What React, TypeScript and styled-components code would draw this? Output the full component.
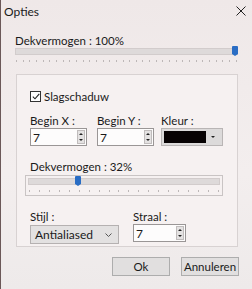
import React from "react"
import styled, { createGlobalStyle } from "styled-components"

const Global = createGlobalStyle`
  html, body { margin: 0; padding: 0; background: #efe9e9; }
  body { font-family: Lato, "Noto Sans", sans-serif; }
`

const Window = styled.div`
  width: 252px;
  height: 289px;
  box-sizing: border-box;
  border-left: 1px solid #6b5858;
  background: linear-gradient(180deg, #efe8e8 0%, #f3eeee 60%, #eeeaea 100%);
  color: #1a1a1a;
  font-size: 11.5px;
  display: flex;
  flex-direction: column;
`

const TitleBar = styled.div`
  height: 22px;
  display: flex;
  align-items: center;
  justify-content: space-between;
  padding: 0 6px 0 3px;
  font-size: 12px;
`

const Label = styled.div`
  line-height: 13px;
  height: 13px;
  white-space: nowrap;
`

const Top = styled.div`
  padding: 12px 14px 0 14px;
`

const Track = styled.div<{ $inset?: boolean }>`
  position: relative;
  height: 5px;
  margin-top: ${(p) => (p.$inset ? "2px" : "1px")};
  background: #dedada;
  border: 1px solid #d2cccc;
`

const Thumb = styled.div<{ $pos: string }>`
  position: absolute;
  top: -3px;
  left: ${(p) => p.$pos};
  width: 6px;
  height: 8px;
  background: #2a6dc4;
  border-radius: 1px 1px 0 0;
  &::after {
    content: "";
    position: absolute;
    left: 0;
    top: 8px;
    border-left: 3px solid transparent;
    border-right: 3px solid transparent;
    border-top: 2px solid #2a6dc4;
  }
`

const Ticks = styled.div`
  display: flex;
  justify-content: space-between;
  margin: 5px 1px 0 1px;
  height: 2px;
  span {
    width: 1px;
    height: 2px;
    background: #bdb7b7;
  }
`

const Group = styled.div`
  margin: 12px 14px 0 15px;
  height: 173px;
  box-sizing: border-box;
  border: 1px solid #d8d2d2;
  background: #f6f1f1;
  padding: 16px 13px 0 13px;
`

const CheckRow = styled.div`
  display: flex;
  align-items: center;
  gap: 3px;
  height: 11px;
`

const Box = styled.div`
  width: 9px;
  height: 9px;
  border: 1px solid #333;
  background: #fff;
  display: flex;
  align-items: center;
  justify-content: center;
`

const FieldRow = styled.div`
  display: flex;
  margin-top: 12px;
`

const Field = styled.div<{ $w: number }>`
  width: ${(p) => p.$w}px;
  display: flex;
  flex-direction: column;
`

const SpinBox = styled.div<{ $w: number }>`
  width: ${(p) => p.$w}px;
  height: 18px;
  box-sizing: border-box;
  border: 1px solid #9a9696;
  background: #fdfcfc;
  display: flex;
  align-items: center;
  font-size: 12px;
  padding-left: 2px;
  margin-top: 1px;
`

const SpinButtons = styled.div`
  margin-left: auto;
  width: 8px;
  height: 14px;
  margin-right: 1px;
  background: #e4e2e2;
  border: 1px solid #c0bcbc;
  display: flex;
  flex-direction: column;
  align-items: center;
  justify-content: space-around;
  box-sizing: border-box;
`

const Arrow = styled.span<{ $up?: boolean }>`
  width: 0;
  height: 0;
  border-left: 2px solid transparent;
  border-right: 2px solid transparent;
  ${(p) => (p.$up ? "border-bottom: 2px solid #222;" : "border-top: 2px solid #222;")}
`

const ColorPick = styled.div`
  width: 62px;
  height: 18px;
  box-sizing: border-box;
  border: 1px solid #b9b5b5;
  background: #dcdada;
  display: flex;
  align-items: center;
  padding: 2px;
  margin-top: 1px;
`

const Swatch = styled.div`
  width: 42px;
  height: 12px;
  background: #070203;
`

const DropArrow = styled.div`
  flex: 1;
  display: flex;
  justify-content: center;
  span {
    border-left: 2px solid transparent;
    border-right: 2px solid transparent;
    border-top: 2px solid #222;
  }
`

const OpacityBlock = styled.div`
  margin-top: 14px;
`

const SliderFrame = styled.div`
  margin: 2px 0 0 -5px;
  width: 198px;
  height: 21px;
  box-sizing: border-box;
  border: 1px solid #c9c4c4;
  padding: 0 2px;
`

const BottomRow = styled.div`
  display: flex;
  margin-top: 14px;
`

const Combo = styled.div`
  width: 89px;
  height: 19px;
  box-sizing: border-box;
  border: 1px solid #b5b1b1;
  background: #e3e1e1;
  display: flex;
  align-items: center;
  padding: 0 6px 0 4px;
  font-size: 12px;
  margin-top: 2px;
  justify-content: space-between;
`

const Buttons = styled.div`
  display: flex;
  justify-content: flex-end;
  gap: 11px;
  padding: 10px 13px 0 0;
`

const Button = styled.div`
  width: 58px;
  height: 19px;
  box-sizing: border-box;
  border: 1px solid #adadad;
  background: #e1dfdf;
  display: flex;
  align-items: center;
  justify-content: center;
  font-size: 11.5px;
`

const tick = (n: number) => Array.from({ length: n }, (_, i) => <span key={i} />)

const Spin = ({ w, v }: { w: number; v: string }) => (
  <SpinBox $w={w}>
    {v}
    <SpinButtons>
      <Arrow $up />
      <Arrow />
    </SpinButtons>
  </SpinBox>
)

const App: React.FC = () => {
  return (
    <Window>
      <Global />
      <TitleBar>
        <span>Opties</span>
        <svg width="10" height="10" viewBox="0 0 10 10">
          <path d="M0.5 0.5 L9.5 9.5 M9.5 0.5 L0.5 9.5" stroke="#222" strokeWidth="1" />
        </svg>
      </TitleBar>

      <Top>
        <Label>Dekvermogen : 100%</Label>
        <Track>
          <Thumb $pos="216px" />
        </Track>
        <Ticks>{tick(34)}</Ticks>
      </Top>

      <Group>
        <CheckRow>
          <Box>
            <svg width="8" height="7" viewBox="0 0 8 7">
              <path d="M0.8 3.6 L3 5.8 L7.3 0.8" stroke="#222" strokeWidth="1.1" fill="none" />
            </svg>
          </Box>
          <span>Slagschaduw</span>
        </CheckRow>

        <FieldRow>
          <Field $w={67}>
            <Label>Begin X :</Label>
            <Spin w={57} v="7" />
          </Field>
          <Field $w={64}>
            <Label>Begin Y :</Label>
            <Spin w={57} v="7" />
          </Field>
          <Field $w={62}>
            <Label>Kleur :</Label>
            <ColorPick>
              <Swatch />
              <DropArrow>
                <span />
              </DropArrow>
            </ColorPick>
          </Field>
        </FieldRow>

        <OpacityBlock>
          <Label>Dekvermogen : 32%</Label>
          <SliderFrame>
            <Track $inset>
              <Thumb $pos="46px" />
            </Track>
            <Ticks>{tick(20)}</Ticks>
          </SliderFrame>
        </OpacityBlock>

        <BottomRow>
          <Field $w={103}>
            <Label>Stijl :</Label>
            <Combo>
              <span>Antialiased</span>
              <svg width="7" height="4" viewBox="0 0 7 4">
                <path d="M0.5 0.5 L3.5 3.5 L6.5 0.5" stroke="#555" fill="none" />
              </svg>
            </Combo>
          </Field>
          <Field $w={53}>
            <Label>Straal :</Label>
            <Spin w={53} v="7" />
          </Field>
        </BottomRow>
      </Group>

      <Buttons>
        <Button>Ok</Button>
        <Button>Annuleren</Button>
      </Buttons>
    </Window>
  )
}

export default App
